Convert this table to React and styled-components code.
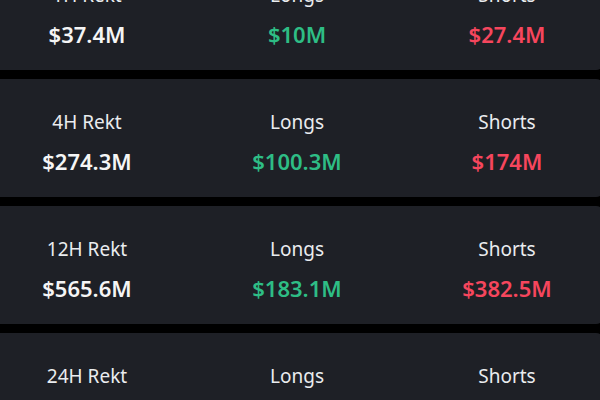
import React from 'react';
import styled, { createGlobalStyle } from 'styled-components';

const GlobalStyle = createGlobalStyle`
  html, body {
    margin: 0;
    padding: 0;
    background: #000;
    overflow: hidden;
  }
  body {
    font-family: "Noto Sans", "Liberation Sans", sans-serif;
  }
`;

const rows = [
  { period: '1H', total: '$37.4M', longs: '$10M', shorts: '$27.4M' },
  { period: '4H', total: '$274.3M', longs: '$100.3M', shorts: '$174M' },
  { period: '12H', total: '$565.6M', longs: '$183.1M', shorts: '$382.5M' },
  { period: '24H', total: '$0M', longs: '$0M', shorts: '$0M' },
];

const StatsCard = ({ row }) => (
  <Card>
    <Stat>
      <Label>{row.period} Rekt</Label>
      <Value>{row.total}</Value>
    </Stat>
    <Stat>
      <Label>Longs</Label>
      <Value tone="long">{row.longs}</Value>
    </Stat>
    <Stat>
      <Label>Shorts</Label>
      <Value tone="short">{row.shorts}</Value>
    </Stat>
  </Card>
);

const App = () => {
  return (
    <>
      <GlobalStyle />
      <List>
        {rows.map((row) => (
          <StatsCard key={row.period} row={row} />
        ))}
      </List>
    </>
  );
};

const List = styled.div`
  display: flex;
  flex-direction: column;
  gap: 9px;
  margin-top: -48px; /* list is scrolled a little */
`;

const Card = styled.div`
  height: 118px;
  width: 604px;
  box-sizing: border-box;
  background: #1e2026;
  border-radius: 0 8px 8px 0;
  display: grid;
  grid-template-columns: 174px 246px 174px;
  padding-top: 32px;
`;

const Stat = styled.div`
  display: flex;
  flex-direction: column;
  align-items: center;
`;

const Label = styled.div`
  font-size: 19px;
  line-height: 22px;
  color: #eaecef;
  margin-bottom: 14px;
`;

const colors = {
  long: '#2ebd85',
  short: '#f6465d',
};

const Value = styled.div`
  font-size: 22px;
  line-height: 28px;
  font-weight: 600;
  color: ${(p) => colors[p.tone] || '#f5f5f5'};
`;

export default App;
